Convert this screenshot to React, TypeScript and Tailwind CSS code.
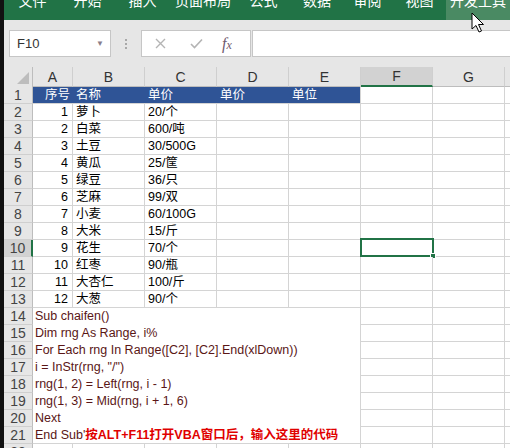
import React from "react";

const tabs = [
  { label: "文件", w: "w-[57px]" },
  { label: "开始", w: "w-[53px]" },
  { label: "插入", w: "w-[57px]" },
  { label: "页面布局", w: "w-[64px]" },
  { label: "公式", w: "w-[57px]" },
  { label: "数据", w: "w-[50px]" },
  { label: "审阅", w: "w-[51px]" },
  { label: "视图", w: "w-[53px]" },
  { label: "开发工具", w: "w-[64px]", active: true },
];

const columns = [
  { key: "A", w: "w-[40px]" },
  { key: "B", w: "w-[72px]" },
  { key: "C", w: "w-[72px]" },
  { key: "D", w: "w-[72px]" },
  { key: "E", w: "w-[72px]" },
  { key: "F", w: "w-[72px]" },
  { key: "G", w: "w-[72px]" },
  { key: "H", w: "w-[72px]" },
];

const items: [number, string, string][] = [
  [1, "萝卜", "20/个"],
  [2, "白菜", "600/吨"],
  [3, "土豆", "30/500G"],
  [4, "黄瓜", "25/筐"],
  [5, "绿豆", "36/只"],
  [6, "芝麻", "99/双"],
  [7, "小麦", "60/100G"],
  [8, "大米", "15/斤"],
  [9, "花生", "70/个"],
  [10, "红枣", "90/瓶"],
  [11, "大杏仁", "100/斤"],
  [12, "大葱", "90/个"],
];

const headers = ["名称", "单价", "单价"];

const code = [
  "Sub chaifen()",
  "Dim rng As Range, i%",
  "For Each rng In Range([C2], [C2].End(xlDown))",
  'i = InStr(rng, "/")',
  "rng(1, 2) = Left(rng, i - 1)",
  "rng(1, 3) = Mid(rng, i + 1, 6)",
  "Next",
];

const cell = "h-[17px] shrink-0 border-r border-b border-[#d4d4d4] bg-white";
const blue = "h-[17px] w-[72px] shrink-0 border-b border-b-[#d4d4d4] bg-[#2f5496] pl-[3px] leading-[16px] text-white";

function RowHead({ n, active }: { n: number; active?: boolean }) {
  return (
    <div
      className={`flex h-[17px] w-[29px] shrink-0 items-center justify-center border-b border-[#cfcfcf] text-[14px] leading-none text-[#444] ${
        active ? "border-r-2 border-r-[#217346] bg-[#d2d2d2]" : "border-r border-r-[#bdbdbd] bg-[#e6e6e6]"
      }`}
    >
      {n}
    </div>
  );
}

function EmptyCells({ from }: { from: number }) {
  return (
    <>
      {columns.slice(from).map((c) => (
        <div key={c.key} className={`${cell} ${c.w}`} />
      ))}
    </>
  );
}

function Cursor() {
  return (
    <svg className="absolute left-[471px] top-[12px]" width="14" height="22" viewBox="0 0 14 22">
      <path
        d="M1 1 L1 17 L5 13.5 L8 20 L10.5 19 L7.5 12.5 L12.5 12.5 Z"
        fill="#fff"
        stroke="#000"
        strokeWidth="1"
        strokeLinejoin="round"
      />
    </svg>
  );
}

export default function App() {
  return (
    <div className="relative flex h-[448px] w-[510px] overflow-hidden bg-[#e6e6e6] font-['Liberation_Sans','Noto_Sans_CJK_SC',sans-serif]">
      <div className="w-[4px] shrink-0 bg-[#111]" />

      <div className="flex min-w-0 flex-1 flex-col">
        {/* ribbon tabs */}
        <div className="flex h-[20px] shrink-0 overflow-hidden bg-[#217346]">
          {tabs.map((t) => (
            <div
              key={t.label}
              className={`flex ${t.w} shrink-0 justify-center ${t.active ? "bg-[#4a8a63]" : ""}`}
            >
              <span className="-mt-[6px] text-[14px] leading-[14px] text-white">{t.label}</span>
            </div>
          ))}
        </div>

        {/* formula bar */}
        <div className="flex h-[47px] shrink-0 items-start pt-[10px]">
          <div className="ml-[5px] flex h-[27px] w-[102px] items-center justify-between border border-[#c6c6c6] bg-white pl-[7px] pr-[6px]">
            <span className="text-[13px] text-[#333]">F10</span>
            <span className="text-[8px] text-[#8a7d8a]">▼</span>
          </div>
          <div className="flex h-[27px] w-[30px] flex-col items-center justify-center gap-[2px]">
            <span className="h-[2px] w-[2px] bg-[#a8a8a8]" />
            <span className="h-[2px] w-[2px] bg-[#a8a8a8]" />
            <span className="h-[2px] w-[2px] bg-[#a8a8a8]" />
          </div>
          <div className="flex h-[27px] w-[110px] items-center border border-[#c6c6c6] bg-white">
            <svg className="ml-[13px]" width="11" height="11" viewBox="0 0 11 11">
              <path d="M1 1 L10 10 M10 1 L1 10" stroke="#b4b4b4" strokeWidth="1.4" />
            </svg>
            <svg className="ml-[24px]" width="13" height="11" viewBox="0 0 13 11">
              <path d="M1 6 L4.5 9.5 L12 1.5" stroke="#b4b4b4" strokeWidth="1.6" fill="none" />
            </svg>
            <span className="ml-[19px] font-['Liberation_Serif',serif] text-[16px] italic leading-none text-[#6e5a6e]">
              f<span className="text-[12px]">x</span>
            </span>
          </div>
          <div className="ml-[1px] h-[27px] flex-1 border border-[#c6c6c6] border-r-0 bg-white" />
        </div>

        {/* column headers */}
        <div className="flex h-[20px] shrink-0">
          <div className="relative h-[20px] w-[29px] shrink-0 border-r border-[#bdbdbd] bg-[#e6e6e6]">
            <div className="absolute bottom-[3px] right-[3px] h-0 w-0 border-b-[12px] border-l-[12px] border-b-[#bdbdbd] border-l-transparent" />
          </div>
          {columns.map((c) => (
            <div
              key={c.key}
              className={`flex h-[20px] ${c.w} shrink-0 items-center justify-center border-r border-[#cfcfcf] text-[14px] leading-none text-[#333] ${
                c.key === "F" ? "border-b-2 border-b-[#217346] bg-[#d2d2d2]" : "border-b border-b-[#bdbdbd] bg-[#e6e6e6]"
              }`}
            >
              {c.key}
            </div>
          ))}
        </div>

        {/* grid */}
        <div className="flex flex-col text-[12.5px] leading-none">
          <div className="flex">
            <RowHead n={1} />
            <div className="h-[17px] w-[40px] shrink-0 border-b border-b-[#d4d4d4] bg-[#2f5496] pr-[3px] text-right leading-[16px] text-white">
              序号
            </div>
            {headers.map((h, i) => (
              <div key={i} className={blue}>
                {h}
              </div>
            ))}
            <div className={`${blue} border-r border-r-[#d4d4d4]`}>单位</div>
            <EmptyCells from={5} />
          </div>

          {items.map(([n, name, price], i) => (
            <div key={n} className="flex">
              <RowHead n={i + 2} active={i + 2 === 10} />
              <div className={`${cell} w-[40px] pr-[4px] text-right leading-[16px] text-black`}>{n}</div>
              <div className={`${cell} w-[72px] pl-[3px] leading-[16px] text-black`}>{name}</div>
              <div className={`${cell} w-[72px] pl-[3px] leading-[16px] text-black`}>{price}</div>
              <div className={`${cell} w-[72px]`} />
              <div className={`${cell} w-[72px]`} />
              <div className={`relative ${cell} w-[72px]`}>
                {i + 2 === 10 && (
                  <div className="absolute -left-[1px] -top-[2px] h-[19px] w-[74px] border-2 border-[#217346]">
                    <div className="absolute -bottom-[4px] -right-[4px] h-[6px] w-[6px] border border-white bg-[#217346]" />
                  </div>
                )}
              </div>
              <div className={`${cell} w-[72px]`} />
              <div className={`${cell} w-[72px]`} />
            </div>
          ))}

          {code.map((line, i) => (
            <div key={line} className="flex">
              <RowHead n={i + 14} />
              <div className="h-[17px] w-[328px] shrink-0 whitespace-nowrap border-r border-[#d4d4d4] bg-white pl-[2px] leading-[16px] text-[#5a1616]">
                {line}
              </div>
              <EmptyCells from={5} />
            </div>
          ))}

          <div className="flex">
            <RowHead n={21} />
            <div className="h-[17px] w-[328px] shrink-0 whitespace-nowrap border-r border-b border-[#d4d4d4] bg-white pl-[2px] leading-[16px] text-[#5a1616]">
              End Sub'<span className="font-bold text-[#e00000]">按ALT+F11打开VBA窗口后，输入这里的代码</span>
            </div>
            <EmptyCells from={5} />
          </div>

          <div className="flex">
            <RowHead n={22} />
            <EmptyCells from={0} />
          </div>
        </div>
      </div>

      <Cursor />
    </div>
  );
}
